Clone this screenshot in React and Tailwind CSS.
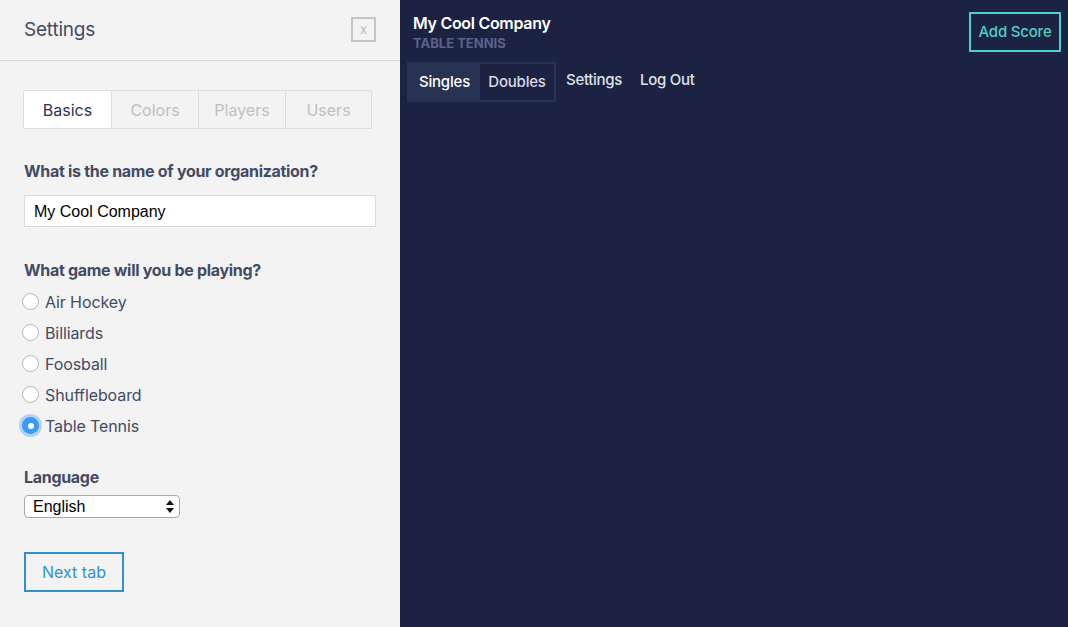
import React from "react";

const games = ["Air Hockey", "Billiards", "Foosball", "Shuffleboard", "Table Tennis"];

function Radio({ checked }) {
  if (checked) {
    return (
      <span className="w-[17px] h-[17px] rounded-full bg-[#3b99fc] flex items-center justify-center shadow-[0_0_0_3px_rgba(59,153,252,0.35)] shrink-0">
        <span className="w-[6px] h-[6px] rounded-full bg-white" />
      </span>
    );
  }
  return <span className="w-[17px] h-[17px] rounded-full bg-white border border-[#b4b4b4] shrink-0" />;
}

export default function App() {
  return (
    <div className="flex w-[1068px] h-[627px] overflow-hidden" style={{ fontFamily: "Inter, 'Liberation Sans', sans-serif" }}>
      <div className="w-[400px] h-full bg-[#f3f3f3] flex flex-col text-[#434b63]">
        <div className="h-[61px] border-b border-[#dcdcdc] flex items-center justify-between pl-6 pr-6">
          <div className="text-[19px] tracking-[-0.2px] text-[#434b63]">Settings</div>
          <div className="w-[25px] h-[25px] border-2 border-[#c4c4c4] flex items-center justify-center text-[#bdbdbd] text-[13px] leading-none mb-[2px]">x</div>
        </div>
        <div className="pl-6 pr-6 pt-[29px]">
          <div className="flex w-[349px] h-[39px] border border-[#dddddd] rounded-[2px] ml-[-1px] text-[16px]">
            <div className="w-[88px] bg-white border-r border-[#dddddd] flex items-center justify-center text-[#2c3350]">Basics</div>
            <div className="w-[87px] border-r border-[#dddddd] flex items-center justify-center text-[#c0c0c0]">Colors</div>
            <div className="w-[87px] border-r border-[#dddddd] flex items-center justify-center text-[#c0c0c0]">Players</div>
            <div className="flex-1 flex items-center justify-center text-[#c0c0c0]">Users</div>
          </div>
          <div className="mt-[32px] text-[16px] font-bold tracking-[-0.3px] leading-[20px]">What is the name of your organization?</div>
          <div className="mt-[14px] w-[352px] h-[32px] bg-white border border-[#dcdcdc] flex items-center pl-[9px] pt-[2px] text-[16px] text-black" style={{ fontFamily: "'Liberation Sans', Arial, sans-serif" }}>My Cool Company</div>
          <div className="mt-[33px] text-[16px] font-bold tracking-[-0.3px] leading-[20px]">What game will you be playing?</div>
          <div className="mt-[6px] flex flex-col">
            {games.map((g, i) => (
              <div key={g} className="h-[31px] flex items-center gap-[6px] ml-[-2px]">
                <Radio checked={i === 4} />
                <span className="text-[16px] tracking-[-0.1px]">{g}</span>
              </div>
            ))}
          </div>
          <div className="mt-[26px] text-[16px] font-bold tracking-[-0.3px] leading-[20px]">Language</div>
          <div className="mt-[8px] w-[156px] h-[23px] bg-white border border-[#a8a8a8] rounded-[4px] flex items-center justify-between pl-[8px] pr-[5px] text-[16px] text-black" style={{ fontFamily: "'Liberation Sans', Arial, sans-serif" }}>
            <span>English</span>
            <svg width="8" height="13" viewBox="0 0 8 13"><path d="M4 0 L8 5 L0 5 Z M0 8 L8 8 L4 13 Z" fill="#111" /></svg>
          </div>
          <div className="mt-[34px] w-[100px] h-[40px] border-2 border-[#2e93c9] flex items-center justify-center text-[#2e93c9] text-[16px]">Next tab</div>
        </div>
      </div>
      <div className="flex-1 h-full bg-[#1c2242] flex flex-col">
        <div className="flex justify-between items-start pt-[12px] pr-[7px]">
          <div className="pl-[13px] pt-[2px]">
            <div className="text-white text-[16px] font-semibold leading-[18px] tracking-[-0.3px]">My Cool Company</div>
            <div className="text-[#5b628a] text-[13px] font-bold leading-[16px] mt-[3px]">TABLE TENNIS</div>
          </div>
          <div className="w-[92px] h-[40px] border-2 border-[#4fd1c5] flex items-center justify-center text-[#4fd1c5] text-[15px] font-medium tracking-[-0.2px]">Add Score</div>
        </div>
        <div className="flex items-start mt-[10px] pl-[7px]">
          <div className="flex border-2 border-[#283252] h-[40px]">
            <div className="w-[71px] bg-[#283252] flex items-center justify-center text-white text-[15px] font-medium tracking-[-0.2px]">Singles</div>
            <div className="w-[74px] flex items-center justify-center text-[#d8dbe6] text-[15px] font-medium tracking-[-0.2px]">Doubles</div>
          </div>
          <div className="flex gap-[18px] ml-[10px] h-[36px] items-center text-[#dfe2ea] text-[15px] font-medium tracking-[-0.3px]">
            <span>Settings</span>
            <span>Log Out</span>
          </div>
        </div>
      </div>
    </div>
  );
}
